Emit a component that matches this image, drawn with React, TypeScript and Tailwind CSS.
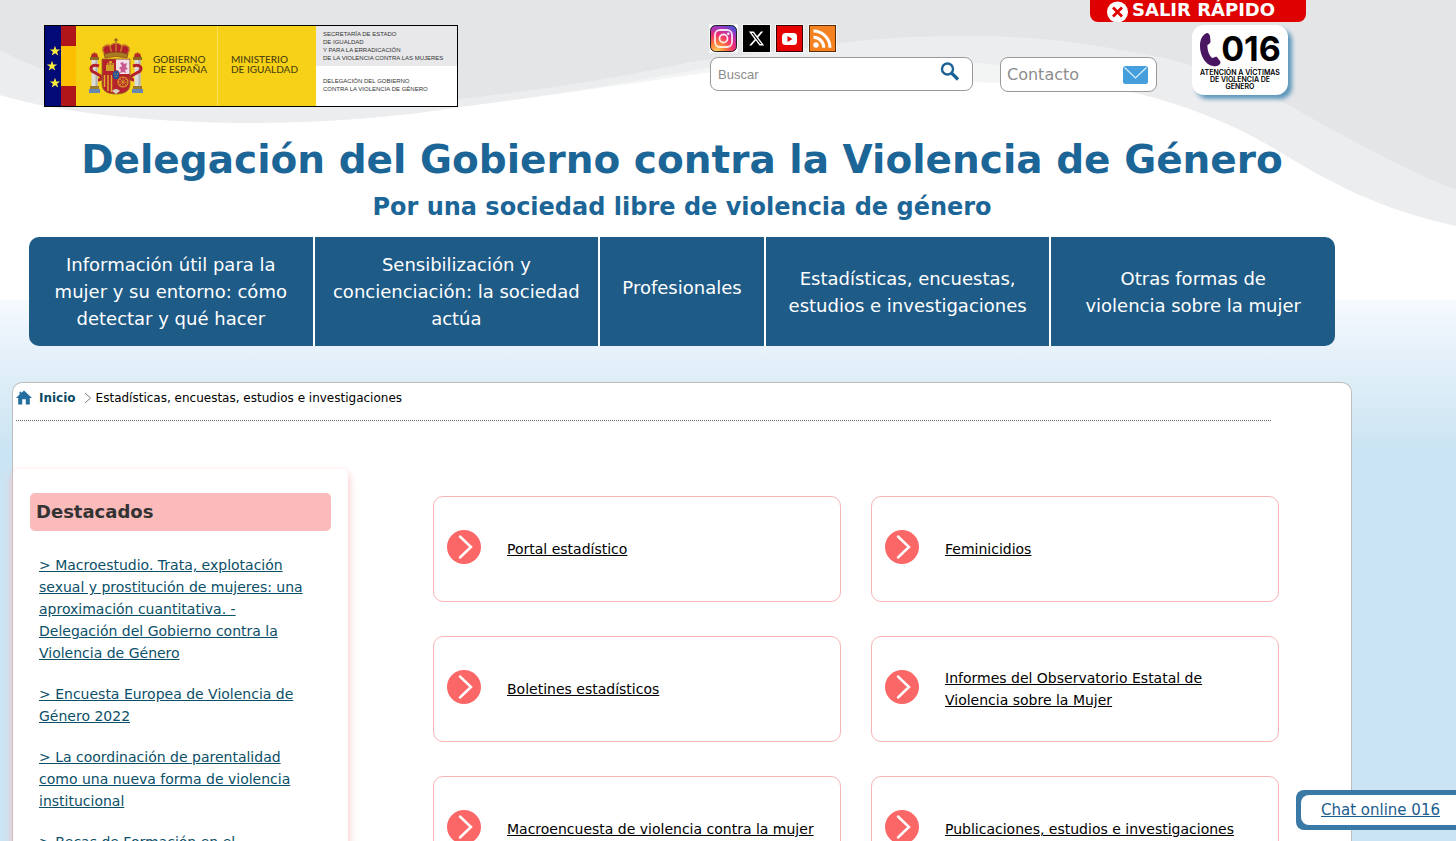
import type { ReactNode } from "react";
import { FaXTwitter } from "react-icons/fa6";

type NavItem = { label: string; padding: string };

const navItems: NavItem[] = [
  { label: "Información útil para la mujer y su entorno: cómo detectar y qué hacer", padding: "px-4" },
  { label: "Sensibilización y concienciación: la sociedad actúa", padding: "px-4" },
  { label: "Profesionales", padding: "px-4 pb-2" },
  { label: "Estadísticas, encuestas, estudios e investigaciones", padding: "px-4" },
  { label: "Otras formas de violencia sobre la mujer", padding: "px-8" },
];

const highlights = [
  "> Macroestudio. Trata, explotación sexual y prostitución de mujeres: una aproximación cuantitativa. - Delegación del Gobierno contra la Violencia de Género",
  "> Encuesta Europea de Violencia de Género 2022",
  "> La coordinación de parentalidad como una nueva forma de violencia institucional",
  "> Becas de Formación en el",
];

const sections = [
  "Portal estadístico",
  "Feminicidios",
  "Boletines estadísticos",
  "Informes del Observatorio Estatal de Violencia sobre la Mujer",
  "Macroencuesta de violencia contra la mujer",
  "Publicaciones, estudios e investigaciones",
];

function Waves() {
  return (
    <svg
      viewBox="0 0 1456 240"
      preserveAspectRatio="none"
      className="absolute inset-x-0 top-0 -z-10 h-60 w-full"
      aria-hidden
    >
      <path
        d="M0 0H1456V226C1375 208 1330 182 1280 152C1235 124 1185 105 1140 94C1060 82 960 84 880 76C820 70 770 66 705 73C620 85 540 97 460 107C390 118 320 123 245 123C150 122 60 113 0 95Z"
        fill="#f3f4f4"
      />
      <path
        d="M0 0H1456V226C1375 208 1330 182 1280 152C1235 124 1185 105 1140 94C1080 78 1020 62 900 58C830 56 760 61 700 69C620 84 540 97 460 107C390 118 320 123 245 123C150 122 60 113 0 95Z"
        fill="#ecedef"
      />
      <path
        d="M0 0H1456V190C1400 168 1340 134 1290 106C1240 80 1190 60 1120 50C1070 40 1020 36 970 36C900 36 860 40 820 46C770 52 730 56 690 62C620 78 540 90 470 98C300 118 100 106 0 50Z"
        fill="#e4e5e7"
      />
    </svg>
  );
}

function Pillar({ x }: { x: number }) {
  return (
    <g transform={`translate(${x} 0)`}>
      <path d="M2 20h7l-1-4-1 1-1.500-2-1.500 2-1-1z" fill="#b5282a" />
      <rect x="1" y="20" width="9" height="3" fill="#8d6a1f" />
      <rect x="2.500" y="23" width="6" height="26" fill="#dcdcda" />
      <rect x="6.500" y="23" width="2" height="26" fill="#b3b3b3" />
      <rect x="1" y="49" width="9" height="3" fill="#9b7a2b" />
      <path d="M0 52h11v4H0z" fill="#6788b0" />
    </g>
  );
}

function CoatOfArms() {
  return (
    <svg viewBox="0 0 54 58" className="h-[58px] w-[54px] shrink-0" aria-hidden>
      <Pillar x={0} />
      <Pillar x={43} />
      <path d="M10 29C4 27 0 30 3 34L10 38C14 40 12 43 9 43" fill="none" stroke="#b5202b" strokeWidth="3" />
      <path d="M44 29C50 27 54 30 51 34L44 38C40 40 42 43 45 43" fill="none" stroke="#b5202b" strokeWidth="3" />
      {/* crown */}
      <path d="M27 1v6M25 3h4" stroke="#7a4a1a" strokeWidth="1" />
      <path d="M14 15C11 9 18 6 22 8C25 5 29 5 32 8C36 6 43 9 40 15L38 19H16Z" fill="#b3202a" />
      <path
        d="M16 18C10 9 18 7 21 9L23 17M38 18C44 9 36 7 33 9L31 17M27 6V17M21 9C24 5 30 5 33 9"
        fill="none"
        stroke="#c99a2c"
        strokeWidth="1.500"
        strokeDasharray="1.500 .6"
      />
      <path d="M15 17Q27 13 39 17L38 21Q27 18 16 21Z" fill="#a67b22" stroke="#81301d" strokeWidth=".6" />
      {/* shield */}
      <path d="M13 22H41V47C41 55 34 57 27 57S13 55 13 47Z" fill="#b5222c" stroke="#8e6c28" strokeWidth=".8" />
      <path d="M27 22.500H40.500V37H27Z" fill="#efe2e8" />
      <path d="M17 34V28h1v-2h1.500v2h1v-3h2v3h1v-2H25v8zM20 24h3v2h-3z" fill="#d1a125" />
      <path d="M31 26l3-1 1 2 3-1-1 4 2 2-3 1 1 3-3-1-3 1 1-3-2-2 3-2z" fill="#c95b91" />
      <path d="M15.500 38v12M19 38v16M22.500 38v17" stroke="#dfad28" strokeWidth="1.500" />
      <circle cx="34" cy="45" r="5" fill="none" stroke="#d49b28" strokeWidth="1.200" />
      <path d="M34 40v10M29 45h10M30.500 41.500l7 7M37.500 41.500l-7 7" stroke="#d49b28" strokeWidth=".8" />
      <path d="M23 54Q27 50 31 54L27 57Z" fill="#d8d2bd" />
      <ellipse cx="27" cy="38" rx="3.500" ry="4.500" fill="#24559c" stroke="#ab2436" strokeWidth=".8" />
      <path d="M25.500 37h1M28 37h1M26.500 39.500h1" stroke="#e4b934" strokeWidth="1" />
    </svg>
  );
}

function GovernmentLogo() {
  const star = "M0-4L1-1.200L4-1.200L1.600.6L2.500 3.500L0 1.700L-2.500 3.500L-1.600.6L-4-1.200L-1-1.200Z";
  return (
    <a href="#" className="flex h-[82px] w-[414px] shrink-0 border border-black bg-[#f7d117]">
      <svg viewBox="0 0 31 80" className="h-20 w-[31px] shrink-0" aria-hidden>
        <rect width="16" height="80" fill="#020a78" />
        <rect x="16" width="15" height="80" fill="#b01519" />
        <rect x="16" y="20" width="15" height="40" fill="#fdbf02" />
        {[[10, 25], [7, 40], [10, 57]].map(([x, y]) => (
          <path key={y} d={star} transform={`translate(${x} ${y}) scale(1.300)`} fill="#fdee3c" />
        ))}
      </svg>
      <span className="flex w-[142px] items-center gap-2.5 border-r border-[#fbe05c] pl-[13px] font-[Lato,sans-serif] text-[10px] leading-[10px] font-medium text-[#4b4210]">
        <CoatOfArms />
        <span className="pb-1">
          GOBIERNO
          <br />
          DE ESPAÑA
        </span>
      </span>
      <span className="flex flex-1 items-center pl-[13px] font-[Lato,sans-serif] text-[10px] leading-[10px] font-medium text-[#4b4210]">
        <span className="pb-1">
          MINISTERIO
          <br />
          DE IGUALDAD
        </span>
      </span>
      <span className="flex w-[141px] flex-col bg-white font-['Liberation_Sans',Arial,sans-serif] text-[6px] leading-2 text-[#333]">
        <span className="block h-10 whitespace-nowrap bg-[#e8e8ea] pt-1 pl-[7px]">
          SECRETARÍA DE ESTADO
          <br />
          DE IGUALDAD
          <br />
          Y PARA LA ERRADICACIÓN
          <br />
          DE LA VIOLENCIA CONTRA LAS MUJERES
        </span>
        <span className="block whitespace-nowrap pt-[11px] pl-[7px]">
          DELEGACIÓN DEL GOBIERNO
          <br />
          CONTRA LA VIOLENCIA DE GÉNERO
        </span>
      </span>
    </a>
  );
}

function SocialLink({ label, children }: { label: string; children: ReactNode }) {
  return (
    <a href="#" aria-label={label} className="size-[27px] outline outline-white/60">
      {children}
    </a>
  );
}

function SocialLinks() {
  return (
    <div className="flex gap-1.5">
      <SocialLink label="Instagram">
        <svg viewBox="0 0 27 27" className="size-full">
          <defs>
            <radialGradient id="insta" cx=".25" cy="1" r="1.100">
              <stop offset="0" stopColor="#ffd45c" />
              <stop offset=".3" stopColor="#ff7a38" />
              <stop offset=".6" stopColor="#ee2b72" />
              <stop offset=".85" stopColor="#a136c0" />
              <stop offset="1" stopColor="#4c52d0" />
            </radialGradient>
          </defs>
          <rect width="27" height="27" fill="#fff" />
          <rect x=".5" y=".5" width="26" height="26" rx="5" fill="url(#insta)" stroke="#222" />
          <rect x="5" y="5" width="17" height="17" rx="5" fill="none" stroke="#fff" strokeOpacity=".85" strokeWidth="1.800" />
          <circle cx="13.500" cy="13.500" r="4" fill="none" stroke="#fff" strokeOpacity=".85" strokeWidth="1.800" />
          <circle cx="18.300" cy="8.700" r="1.200" fill="#fff" />
        </svg>
      </SocialLink>
      <SocialLink label="X">
        <span className="flex size-full items-center justify-center bg-black text-white">
          <FaXTwitter size={17} />
        </span>
      </SocialLink>
      <SocialLink label="YouTube">
        <svg viewBox="0 0 27 27" className="size-full">
          <rect x=".5" y=".5" width="26" height="26" fill="#e60000" stroke="#3a0000" />
          <rect x="6" y="8" width="15" height="12" rx="3.500" fill="#fff" />
          <path d="M11.500 11v6l5-3z" fill="#e60000" />
        </svg>
      </SocialLink>
      <SocialLink label="RSS">
        <svg viewBox="0 0 27 27" className="size-full">
          <rect x=".5" y=".5" width="26" height="26" fill="#f58220" stroke="#5a2d08" />
          <circle cx="7" cy="20" r="2.700" fill="#fff" />
          <path d="M4.500 12.300A10.500 10.500 0 0 1 14.800 22.700M4.500 6A16.700 16.700 0 0 1 21 22.700" fill="none" stroke="#fff" strokeWidth="3" />
        </svg>
      </SocialLink>
    </div>
  );
}

function HelplineBadge() {
  return (
    <a
      href="#"
      className="flex h-[70px] w-24 shrink-0 flex-col items-center rounded-xl bg-white pt-1 font-[Inter,sans-serif] font-bold text-black shadow-[4px_4px_4px_#5f97bb]"
    >
      <span className="flex h-10 items-center">
        <svg viewBox="0 0 22 36" className="h-9 w-[22px]" aria-hidden>
          <path
            d="M6 3C8 1 10 2 11 5L11.500 10C11.500 13 9.500 13 8.500 14C8 19 10 24 13 27C15 27 16 25 18 26L21 30C23 33 18 36 14 35C6 34 1 24 1 15C1 9 3 5 6 3Z"
            fill="#4a1661"
          />
        </svg>
        <span className="text-[34px] leading-9">016</span>
      </span>
      <span className="whitespace-nowrap text-center text-[7px] leading-[7px] font-semibold">
        ATENCIÓN A VÍCTIMAS
        <br />
        DE VIOLENCIA DE
        <br />
        GÉNERO
      </span>
    </a>
  );
}

function Header() {
  return (
    <header className="relative">
      <div className="flex items-start pt-[25px] pr-[76px] pl-11">
        <GovernmentLogo />
        <div className="ml-auto w-[263px]">
          <SocialLinks />
          <form className="mt-[5px] flex h-[34px] items-center rounded-lg border border-[#999] bg-white pr-3">
            <label htmlFor="search" className="sr-only">
              Buscar
            </label>
            <input
              id="search"
              type="text"
              placeholder="Buscar"
              className="h-full min-w-0 flex-1 bg-transparent px-[7px] font-['Liberation_Sans',Arial,sans-serif] text-[13px] text-[#333] outline-none placeholder:text-[#8c8c8c]"
            />
            <button type="submit" aria-label="Buscar" className="pb-1">
              <svg viewBox="0 0 20 20" className="size-5" aria-hidden>
                <circle cx="7.500" cy="7" r="5.500" fill="none" stroke="#1b6397" strokeWidth="2.400" />
                <path d="M11.500 11l6.500 6.500" stroke="#1b6397" strokeWidth="3.200" />
              </svg>
            </button>
          </form>
        </div>
        <a
          href="#"
          className="mt-8 ml-[27px] flex h-[35px] w-[157px] items-center justify-between rounded-lg border border-[#999] bg-white pr-2 pl-1.5 text-base text-[#8c8c8c]"
        >
          Contacto
          <svg viewBox="0 0 25 18" className="h-[18px] w-[25px]" aria-hidden>
            <rect width="25" height="18" rx="2.500" fill="#459fdc" />
            <path d="M1.500 1.500L12.500 12L23.500 1.500" fill="none" stroke="#d8eefb" strokeWidth="1.200" />
          </svg>
        </a>
        <div className="ml-[35px]">
          <HelplineBadge />
        </div>
      </div>
      <button
        type="button"
        className="absolute top-0 right-[58px] flex h-[22px] w-[216px] items-start gap-1 overflow-hidden rounded-b-lg bg-[#df0000] pl-4 text-lg leading-5 font-bold text-white"
      >
        <svg viewBox="0 0 22 22" className="size-[22px] shrink-0" aria-hidden>
          <circle cx="11.500" cy="12" r="10.500" fill="#fff" />
          <path d="M7 7.500l9 9M16 7.500l-9 9" stroke="#df0000" strokeWidth="2.800" />
        </svg>
        SALIR RÁPIDO
      </button>
      <div className="pt-[29px] text-center font-bold text-[#1c6597]">
        <h1 className="text-[39px] leading-12">Delegación del Gobierno contra la Violencia de Género</h1>
        <p className="mt-[7px] text-2xl leading-8">Por una sociedad libre de violencia de género</p>
      </div>
    </header>
  );
}

function MainNav() {
  return (
    <nav
      aria-label="Principal"
      className="mx-[29px] mt-3.5 grid min-h-[109px] grid-cols-[284fr_284fr_164fr_284fr_284fr] gap-0.5 overflow-hidden rounded-[10px] bg-white text-lg leading-[27px] text-white"
    >
      {navItems.map((item) => (
        <a
          key={item.label}
          href="#"
          className={`flex items-center justify-center bg-[#1e5b87] text-center ${item.padding}`}
        >
          {item.label}
        </a>
      ))}
    </nav>
  );
}

function Breadcrumb() {
  return (
    <nav
      aria-label="Ruta"
      className="mr-20 ml-[3px] flex h-[38px] items-center border-b border-dotted border-[#666] pb-2 text-xs text-black"
    >
      <svg viewBox="0 0 18 16" className="h-[15px] w-4" aria-hidden>
        <path d="M9 0L18 8.500H15.500V16H11V10H7V16H2.500V8.500H0L4 4.500V1.500H6V3Z" fill="#246d9f" />
      </svg>
      <a href="#" className="ml-[7px] font-bold text-[#0a4a63]">
        Inicio
      </a>
      <svg viewBox="0 0 8 12" className="mr-1 ml-2 h-3 w-2" aria-hidden>
        <path d="M1 1l5.500 5L1 11" fill="none" stroke="#777" />
      </svg>
      <span>Estadísticas, encuestas, estudios e investigaciones</span>
    </nav>
  );
}

function Sidebar() {
  return (
    <aside className="w-[335px] shrink-0 self-stretch rounded-md bg-white px-[17px] pt-6 pb-4 shadow-[0_4px_10px_#fbb9b9]">
      <h2 className="rounded-[5px] bg-[#fbbbbb] px-1.5 text-lg leading-[38px] font-bold text-[#333]">
        Destacados
      </h2>
      <ul className="mt-[23px] flex flex-col gap-[19px] pr-5 pl-[9px] text-sm leading-[22px]">
        {highlights.map((text) => (
          <li key={text}>
            <a href="#" className="text-[#0b4f68] underline">
              {text}
            </a>
          </li>
        ))}
      </ul>
    </aside>
  );
}

function SectionCard({ title }: { title: string }) {
  return (
    <a
      href="#"
      className="flex h-[106px] items-center gap-[26px] rounded-[10px] border border-[#f9b4b4] bg-white pr-4 pl-[13px] text-sm leading-[22px] text-black"
    >
      <svg viewBox="0 0 34 34" className="-mt-1 size-[34px] shrink-0" aria-hidden>
        <circle cx="17" cy="17" r="17" fill="#fb6767" />
        <path d="M13 6.500L24 17L13 27.500" fill="none" stroke="#fff" strokeWidth="2.500" strokeLinecap="round" />
      </svg>
      <span className="underline">{title}</span>
    </a>
  );
}

export default function App() {
  return (
    <div className="relative isolate h-screen overflow-hidden bg-[linear-gradient(#fff_300px,#f6fafe_300px,#e6f1fa_350px,#dcedf6_385px,#cbe4f3_450px)] font-['DejaVu_Sans',Verdana,sans-serif]">
      <Waves />
      <div className="pr-[92px]">
        <Header />
        <MainNav />
        <main className="mx-3 mt-9 min-h-[500px] rounded-t-[10px] border border-b-0 border-[#bdbdbd] bg-white">
          <Breadcrumb />
          <div className="mt-12 flex items-start pr-[72px]">
            <Sidebar />
            <div className="mt-[27px] ml-[85px] grid flex-1 grid-cols-2 gap-x-[30px] gap-y-[34px]">
              {sections.map((title) => (
                <SectionCard key={title} title={title} />
              ))}
            </div>
          </div>
        </main>
      </div>
      <a
        href="#"
        className="fixed right-0 bottom-[11px] flex h-10 w-40 items-center rounded-l-lg border-5 border-r-0 border-[#3a78a5] bg-[#3a78a5] text-[15px] text-[#1b5c8e]"
      >
        <span className="flex h-full w-full items-center rounded-l-lg bg-white pl-5 whitespace-nowrap underline">
          Chat online 016
        </span>
      </a>
    </div>
  );
}
